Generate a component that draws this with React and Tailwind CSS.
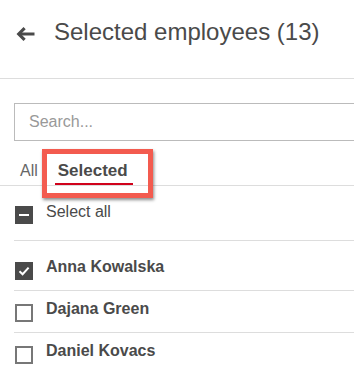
const employees = [
  { name: 'Anna Kowalska', checked: true },
  { name: 'Dajana Green', checked: false },
  { name: 'Daniel Kovacs', checked: false },
];

const Checkbox = ({ state }) => {
  if (state === 'checked') {
    return (
      <div className="w-[18px] h-[18px] bg-[#4a4a4a] flex items-center justify-center shrink-0">
        <svg width="14" height="14" viewBox="0 0 14 14">
          <path d="M2.5 7.2 L5.6 10.2 L11.6 3.6" fill="none" stroke="white" strokeWidth="2" />
        </svg>
      </div>
    );
  }
  if (state === 'mixed') {
    return (
      <div className="w-[18px] h-[18px] bg-[#4a4a4a] flex items-center justify-center shrink-0">
        <div className="w-[10px] h-[2px] bg-white" />
      </div>
    );
  }
  return <div className="w-[18px] h-[18px] border-2 border-[#777] bg-white shrink-0" />;
};

export default function App() {
  return (
    <div className="w-[354px] h-[368px] overflow-hidden bg-white text-[#4a4a4a] font-['Liberation_Sans',Arial,sans-serif]">
      {/* header */}
      <div className="h-[79px] border-b border-[#ddd] flex items-start pt-[18px]">
        <svg className="ml-[15px] mt-[8px]" width="20" height="16" viewBox="0 0 20 16">
          <path d="M19.5 8 H5" fill="none" stroke="#4a4a4a" strokeWidth="3" />
          <path d="M8.5 1 L10.7 3.2 L5.9 8 L10.7 12.8 L8.5 15 L1.5 8 Z" fill="#4a4a4a" />
        </svg>
        <h1 className="ml-[19px] text-[24px] leading-[28px] whitespace-nowrap">Selected employees (13)</h1>
      </div>

      {/* search */}
      <div className="pl-[14px] pt-[24px]">
        <input
          type="text"
          placeholder="Search..."
          className="w-[360px] h-[38px] border border-[#bbb] px-[14px] text-[16px] text-[#4a4a4a] placeholder:text-[#999] outline-none"
        />
      </div>

      {/* tabs */}
      <div className="relative h-[45px] border-b border-[#ddd] flex items-end text-[16px] leading-[20px]">
        <div className="ml-[20px] pb-[4px] text-[#666]">All</div>
        <div className="ml-[17px] w-[78px] pl-[3px] pb-[2px] border-b-2 border-[#d0021b] font-bold text-[17px]">Selected</div>
        <div className="absolute left-[42px] top-[8px] w-[111px] h-[49px] border-[5px] border-[#f35b4f] shadow-[1px_2px_3px_rgba(0,0,0,0.45)]" />
      </div>

      {/* select all */}
      <div className="ml-[14px] h-[55px] border-b border-[#ddd] pt-[20px] flex items-start text-[16px] leading-[20px]">
        <div className="ml-[1px]"><Checkbox state="mixed" /></div>
        <span className="ml-[13px] -mt-[4px]">Select all</span>
      </div>

      {/* list */}
      <div className="pt-[8px]">
        {employees.map((e) => (
          <div key={e.name} className="ml-[14px] h-[42px] border-b border-[#ddd] pt-[13px] flex items-start text-[16px] leading-[20px]">
            <div className="ml-[1px]"><Checkbox state={e.checked ? 'checked' : 'none'} /></div>
            <span className="ml-[13px] -mt-[5px] font-bold">{e.name}</span>
          </div>
        ))}
      </div>
    </div>
  );
}
